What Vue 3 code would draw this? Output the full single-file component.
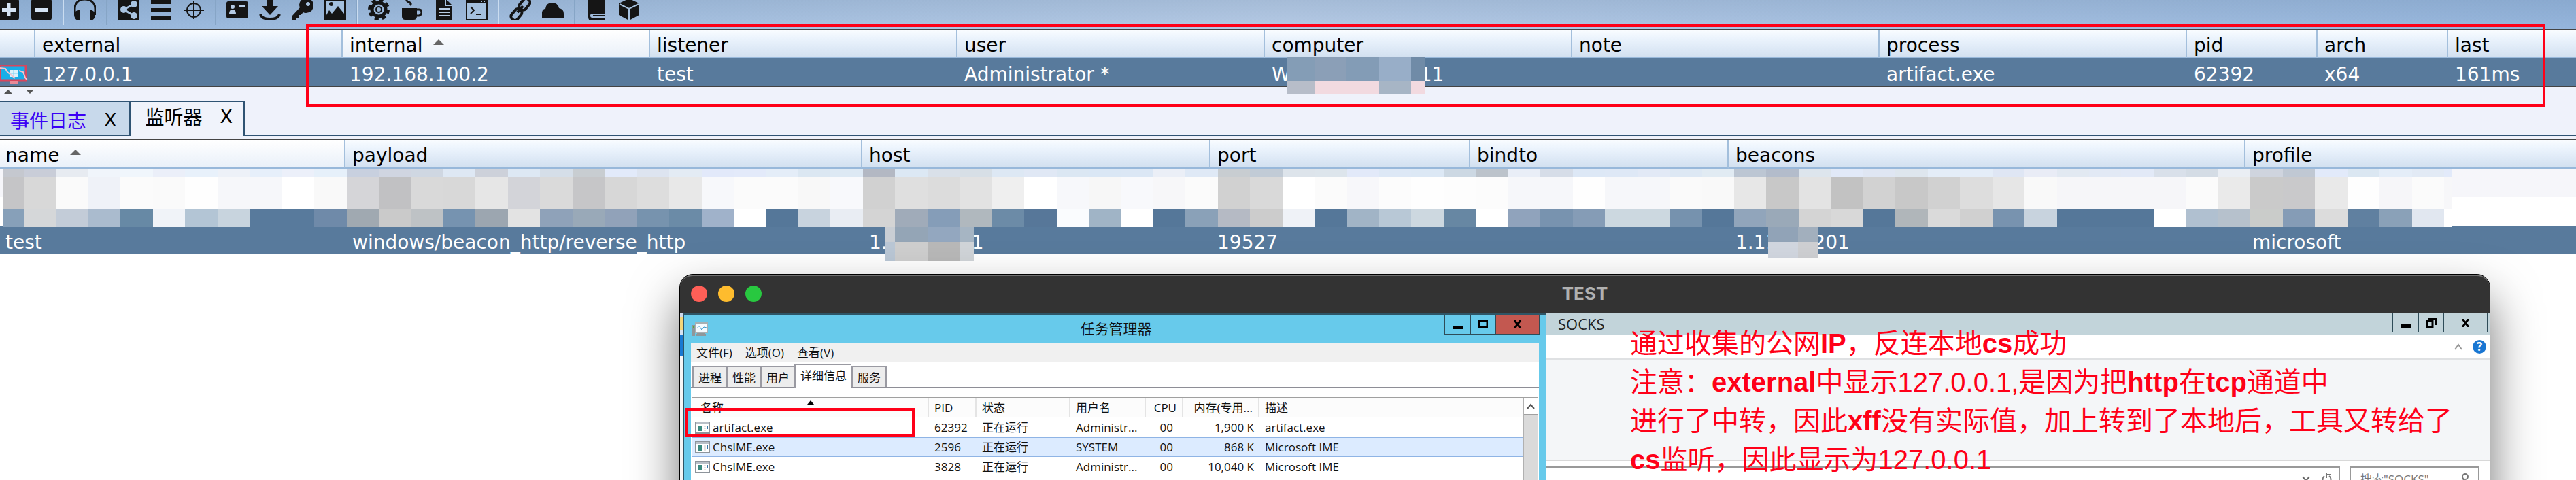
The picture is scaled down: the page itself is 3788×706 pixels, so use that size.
<script setup>
const toolbar = [
  'plus', 'minus', '|', 'headphones', '|', 'share', 'list', 'target', '|',
  'card', 'download', 'key', 'image', '|', 'gear', 'coffee', 'file', 'terminal', '|',
  'link', 'cloud', '|', 'book', 'cube',
]

const beaconCols = [
  { key: 'icon', w: 52 },
  { key: 'external', w: 452 },
  { key: 'internal', w: 452, sorted: true },
  { key: 'listener', w: 452 },
  { key: 'user', w: 452 },
  { key: 'computer', w: 452 },
  { key: 'note', w: 452 },
  { key: 'process', w: 452 },
  { key: 'pid', w: 192 },
  { key: 'arch', w: 192 },
  { key: 'last', w: 0 },
]
const beacon = {
  external: '127.0.0.1', internal: '192.168.100.2', listener: 'test', user: 'Administrator *',
  note: '', process: 'artifact.exe', pid: '62392', arch: 'x64', last: '161ms',
}

const listenerCols = [
  { key: 'name', w: 508, sorted: true },
  { key: 'payload', w: 760 },
  { key: 'host', w: 512 },
  { key: 'port', w: 382 },
  { key: 'bindto', w: 380 },
  { key: 'beacons', w: 760 },
  { key: 'profile', w: 0 },
]
const listener = {
  name: 'test', payload: 'windows/beacon_http/reverse_http', port: '19527', bindto: '', profile: 'microsoft',
}

const colors = (s) => s.trim().split(/\s+/).map((c) => '#' + c)
const mosaic = [
  ...colors(`c5c8cf c9cdd8 e7ebf1 f0f5fb f0f6fc ebeff9 e8f1fb edf1f8 e6effa ecf0fa e6f0fa
    c8d0df d0d5e1 cfd7e2 dee8f4 cdd1da dde8f4 d5dee8 c8cdd1 e2eafa dde4f0 e3ebf4 e2e9fa e3eafa e4edf8 dbe7f2 dde9f4
    b3b8c3 dce8f4 d9e0e9 d7dfe6 dde8f4 e0e8f5 dbe7f3 dae7f5 dbe7f5 ebeff7 dfe9f6
    c8cdd1 c1cbd6 dde4eb dde5ec e2e9f9 dde8f6 dce8f5 ccd8e3 bcc3cb e9eef7 d6dde8 dde8f6 dee8f6 e2e9f6 dde8f4 e1ebf3
    bcc6d3 b3bccb dde5ed e1e9f8 dfe6f3 dee6ee e4edf8 e4edf8 dfe6f4 e9ecf6 e2e9f2 e2e9f5 e2e9f7 d9e0ea d4dce5 eaeef4
    cfd4de c0c8d3 e2eafa dbe7f2 e4edf8 e2eaf5 e2eafa`),
  ...colors(`c5c5c7 d8d8d8 fafafa eff2f8 fbfbfb fafafa fefefe f6f7fa f6f7fa ffffff f9f9f9
    d5d5d8 c1c1c3 d9d9d9 d8d8d8 e6e6e6 d3d4d9 dadada c6c6c8 d7d7d7 dddddd e8e8e8 f7f8fb fbfbfb fbfbfb f8f8f8 f8f9fc
    d1d1d1 dfdfdf dcdcdc e2e2e2 efefef ffffff f7f8fb f7f7f7 f8f9fc f7f7f9 fbfbfb
    d1d1d1 d9d9d9 ffffff fbfbfb f7f7fa fcfcfc fefefe fdfdfd fcfcfc f6f7fa f6f7fa fefefe f6f7fa f6f7fa fafafa f9f9f9
    e7e7e7 c8c8c8 e3e3e3 c2c2c2 d2d2d2 c8c8c8 d1d1d1 dddddd e6e6e6 f9f9f9 f6f6f9 f6f6f9 f6f6f9 f6f6f9 fbfbfb eaeaea
    cacaca c9c9cb e9e9e9 fefefe f6f6f9 fbfbfb f7f7f9`),
  ...colors(`87a0b9 d5d7d9 c3ccd8 aabbce 6789a5 f0f3f8 b3c5d5 c8d4de 587a9c 587a9c 6f8aa9
    a0a9b1 cacaca bec2c5 7693b0 9ca6b0 e3e3e3 8fa2b9 99a9b8 91a2b9 7793ae 6b8ba7 a0b2ca ffffff 557799 c8d3de e9edf3
    d4d4d4 a0abb9 859db8 b0b8be 6c8ba7 577799 fafcfe a0b4c6 ffffff 557799 8aa1b8
    b5bac4 cccccc eff2f7 557799 a1b4c6 b8c8d6 cdd8e0 6787a3 ffffff 90a3bc 7893af 859cb6 ccd8e0 ccd8e0 7692ae 557799
    91a5bb 9aa9b8 d4d4d4 d8d8d8 557799 b0b6ba dadada d0d0d0 7893af c8d3de 557799 557799 557799 ffffff b0c0d0 b6c1cc
    caccca 859cb6 dcdcdc 6080a0 8aa1b8 e1e7f0 ffffff`),
]
const computerMask = colors('849db6 8b9fb7 839cb6 98aec8 708ba7 b7bdc9 f2dae0 f2dae0 a7b5c5 f2dae0')
const hostMask = colors('c9ced4 94a5b6 93a7bf a6b5c3 bac7d5 cecece b8b8b8 d0d4d8')
const beaconsMask = colors('91a3b7 a2afbd d1d6df cecfd2')

const procs = [
  { name: 'artifact.exe', pid: '62392', state: '正在运行', user: 'Administr...', cpu: '00', mem: '1,900 K', desc: 'artifact.exe' },
  { name: 'ChsIME.exe', pid: '2596', state: '正在运行', user: 'SYSTEM', cpu: '00', mem: '868 K', desc: 'Microsoft IME', selected: true },
  { name: 'ChsIME.exe', pid: '3828', state: '正在运行', user: 'Administr...', cpu: '00', mem: '10,040 K', desc: 'Microsoft IME' },
]
const taskTabs = ['进程', '性能', '用户', '详细信息', '服务']
</script>

<template>
  <main class="app">
    <nav class="toolbar" aria-label="toolbar">
      <template v-for="(t, i) in toolbar" :key="i">
        <span v-if="t === '|'" class="sep"></span>
        <button v-else class="tool" type="button" :aria-label="t">
          <svg viewBox="0 0 32 32" width="32" height="32" fill="#151515">
            <template v-if="t === 'plus'">
              <rect x="0" y="0" width="31" height="32" rx="4" />
              <path d="M16 7v19M6 16.500h20" stroke="#d5e4f4" stroke-width="5" />
            </template>
            <template v-else-if="t === 'minus'">
              <rect x="1" y="0" width="30" height="32" rx="4" />
              <path d="M7 16.500h18" stroke="#d5e4f4" stroke-width="5" />
            </template>
            <template v-else-if="t === 'headphones'">
              <path d="M1 24V15C1 6 7 1 15.500 1S31 6 31 15v9" fill="none" stroke="#151515" stroke-width="3" />
              <path d="M8 17v15H5q-5-3-5-8t5-7zM23 17v15h3q5-3 5-8t-5-7z" />
            </template>
            <template v-else-if="t === 'share'">
              <rect x="0" y="0" width="32" height="32" rx="3" />
              <path d="M24 8 9 16l15 9" fill="none" stroke="#a8c3e0" stroke-width="3" />
              <circle cx="24" cy="8" r="5" fill="#a8c3e0" /><circle cx="9" cy="16" r="5" fill="#a8c3e0" /><circle cx="24" cy="25" r="5" fill="#a8c3e0" />
            </template>
            <template v-else-if="t === 'list'">
              <path d="M1 2h30v6H1zM1 14h30v6H1zM1 26h30v6H1z" />
            </template>
            <template v-else-if="t === 'target'">
              <circle cx="16" cy="17" r="10" fill="none" stroke="#151515" stroke-width="2" />
              <path d="M16 4v26M1 17h30" stroke="#151515" stroke-width="2" />
            </template>
            <template v-else-if="t === 'card'">
              <rect x="0" y="4" width="32" height="25" rx="3" />
              <circle cx="9" cy="12" r="3" fill="#b5cbe4" />
              <path d="M4 22q0-6 5-6t5 6zM18 10h10v3H18z" fill="#b5cbe4" />
            </template>
            <template v-else-if="t === 'download'">
              <path d="M12 0h8v11h8L16 24 4 11h8z" />
              <path d="M2 23q2 7 14 7t14-7" fill="none" stroke="#151515" stroke-width="4" />
            </template>
            <template v-else-if="t === 'key'">
              <path d="M21 0q11 0 11 10T21 21q-3 0-4-1l-4 4h-3v4H7v3H0v-5l12-13q-1-2-1-4Q12 0 21 0z" />
              <circle cx="24" cy="8" r="3" fill="#a8c3e0" />
            </template>
            <template v-else-if="t === 'image'">
              <path d="M0 0h32v31H0z" />
              <path d="M3 3h26v19l-9-11-9 11-4-5-4 7z" fill="#a4c0de" />
              <circle cx="10" cy="8" r="3" />
            </template>
            <template v-else-if="t === 'gear'">
              <circle cx="16" cy="16" r="14" fill="none" stroke="#151515" stroke-width="4" stroke-dasharray="6 5" />
              <circle cx="16" cy="16" r="10" fill="none" stroke="#151515" stroke-width="5" />
              <circle cx="16" cy="16" r="4" fill="none" stroke="#151515" stroke-width="2" />
            </template>
            <template v-else-if="t === 'coffee'">
              <path d="M2 14h22v12q0 5-5 5H7q-5 0-5-5z" />
              <path d="M24 16h3q4 0 4 4t-4 5h-3M10 0q-3 3 2 5t2 5" fill="none" stroke="#151515" stroke-width="3" />
            </template>
            <template v-else-if="t === 'file'">
              <path d="M4 0h14l10 10v22H4z" />
              <path d="M18 0v10h10" fill="none" stroke="#a8c3e0" stroke-width="2" />
              <path d="M8 15h16M8 20h16M8 25h16" stroke="#b8cde5" stroke-width="2" />
            </template>
            <template v-else-if="t === 'terminal'">
              <path d="M1 3h30v28H1z" fill="#a4c0de" stroke="#151515" stroke-width="2" />
              <path d="M0 0h32v7H0z" /><path d="M22 4h2M26 4h2" stroke="#a4c0de" stroke-width="2" />
              <path d="m7 12 5 5-5 5M15 23h7" fill="none" stroke="#151515" stroke-width="2" />
            </template>
            <template v-else-if="t === 'link'">
              <g fill="none" stroke="#151515" stroke-width="4">
                <rect x="13" y="3" width="18" height="11" rx="5" transform="rotate(-50 22 8)" />
                <rect x="1" y="18" width="18" height="11" rx="5" transform="rotate(-50 10 23)" />
                <path d="m12 20 8-9" />
              </g>
            </template>
            <template v-else-if="t === 'cloud'">
              <path d="M0 28V20q1-5 5-5 1-9 10-9 8 0 10 8 7 1 7 8v6z" />
            </template>
            <template v-else-if="t === 'book'">
              <path d="M5 0h23v22H10q-3 0-3 3t3 3h18v4H8q-4 0-4-5V2z" />
              <path d="M11 25h17" stroke="#151515" stroke-width="2" />
            </template>
            <template v-else>
              <path d="m16 0 15 7v17l-15 8-15-8V7z" />
              <path d="m2 8 14 7 14-7M16 15v17" fill="none" stroke="#a8c3e0" stroke-width="2" />
            </template>
          </svg>
        </button>
      </template>
    </nav>

    <table class="grid">
      <colgroup><col v-for="c in beaconCols" :key="c.key" :style="c.w ? { width: c.w + 'px' } : {}" /></colgroup>
      <thead>
        <tr>
          <th v-for="c in beaconCols" :key="c.key" :class="{ sorted: c.sorted }" scope="col">
            <template v-if="c.key !== 'icon'">{{ c.key }}</template><i v-if="c.sorted" class="up"></i>
          </th>
        </tr>
      </thead>
      <tbody>
        <tr class="sel">
          <td v-for="c in beaconCols" :key="c.key" :class="c.key">
            <svg v-if="c.key === 'icon'" class="host-icon" viewBox="0 0 41 30" width="41" height="30">
              <path d="M0 1h38v22H0z" fill="#17aee8" stroke="#d8455c" stroke-width="3" />
              <path d="M14 8h13v10H14z" fill="#fff" opacity=".85" /><path d="M14 13h13M20 8v10" stroke="#7fd0f0" stroke-width="1" />
              <path d="m0 5 8 1 3 5 5 4 6 5M28 9l6 2 3 8 3 4" fill="none" stroke="#f4c3cb" stroke-width="2" />
              <path d="M14 24h12v4H14z" fill="#e98a97" />
            </svg>
            <template v-else-if="c.key === 'computer'">
              W<span class="gap-computer"></span>11
              <span class="mask mask-computer"><i v-for="(m, k) in computerMask" :key="k" :style="{ background: m }"></i></span>
            </template>
            <template v-else>{{ beacon[c.key] }}</template>
          </td>
        </tr>
      </tbody>
    </table>

    <div class="splitter"><i class="up"></i><i class="up down"></i></div>

    <div class="tabs">
      <div class="tab"><button type="button">事件日志</button><button type="button" class="x">X</button></div>
      <div class="tab active"><button type="button">监听器</button><button type="button" class="x">X</button></div>
      <div class="tabs-rest"></div>
    </div>

    <section class="listeners">
      <table class="grid">
        <colgroup><col v-for="c in listenerCols" :key="c.key" :style="c.w ? { width: c.w + 'px' } : {}" /></colgroup>
        <thead>
          <tr>
            <th v-for="c in listenerCols" :key="c.key" :class="{ sorted: c.sorted }" scope="col">{{ c.key }}<i v-if="c.sorted" class="up"></i></th>
          </tr>
        </thead>
        <tbody>
          <tr class="odd"><td :colspan="listenerCols.length"></td></tr>
          <tr class="even"><td :colspan="listenerCols.length"></td></tr>
          <tr class="sel">
            <td v-for="c in listenerCols" :key="c.key" :class="c.key">
              <template v-if="c.key === 'host'">
                1.<span class="gap-host"></span>1
                <span class="mask mask-host"><i v-for="(m, k) in hostMask" :key="k" :style="{ background: m }"></i></span>
              </template>
              <template v-else-if="c.key === 'beacons'">
                1.11<span class="gap-beacons"></span>201
                <span class="mask mask-beacons"><i v-for="(m, k) in beaconsMask" :key="k" :style="{ background: m }"></i></span>
              </template>
              <template v-else>{{ listener[c.key] }}</template>
            </td>
          </tr>
        </tbody>
      </table>
      <div class="mosaic"><i v-for="(m, k) in mosaic" :key="k" :style="{ background: m }"></i></div>
    </section>

    <div class="outline outline-beacon"></div>

    <section class="mac">
      <header class="mac-bar">
        <div class="lights">
          <button class="red" type="button" aria-label="close"></button>
          <button class="yellow" type="button" aria-label="minimize"></button>
          <button class="green" type="button" aria-label="zoom"></button>
        </div>
        <h1>TEST</h1>
      </header>
      <div class="mac-body">
        <div class="behind"></div>

        <section class="task">
          <header class="task-bar">
            <svg viewBox="0 0 23 20" width="23" height="20">
              <path d="M0 4h4v16H0zM7 15h11v2h2v3H5v-3h2z" fill="#8f979b" />
              <path d="M1 6h2v3H1z" fill="#52b03b" />
              <path d="M5 1h17v14H5z" fill="#f5fbff" stroke="#a6b0b4" stroke-width="2" />
              <path d="m7 9 3-4 4 6 3-4 4 1" fill="none" stroke="#2a90c9" stroke-width="1" />
            </svg>
            <h2>任务管理器</h2>
            <div class="wbtns">
              <button type="button" aria-label="最小化"><svg width="14" height="14" viewBox="0 0 14 14"><path d="M0 9h14v5H0z" /></svg></button>
              <button type="button" aria-label="最大化"><svg width="14" height="12" viewBox="0 0 14 12"><path d="M1 1h12v9H1z" fill="none" stroke="#000" stroke-width="3" /></svg></button>
              <button type="button" class="close" aria-label="关闭"><svg width="13" height="12" viewBox="0 0 13 12"><path d="m2 0 9 12M11 0 2 12" stroke="#000" stroke-width="3" /></svg></button>
            </div>
          </header>
          <div class="panel">
            <nav class="menu"><button type="button">文件(F)</button><button type="button">选项(O)</button><button type="button">查看(V)</button></nav>
            <div class="ttabs">
              <button v-for="t in taskTabs" :key="t" type="button" :class="{ on: t === '详细信息' }">{{ t }}</button>
            </div>
            <div class="procs">
              <table>
                <colgroup><col class="c-name" /><col class="c-pid" /><col class="c-state" /><col class="c-user" /><col class="c-cpu" /><col class="c-mem" /><col /></colgroup>
                <thead>
                  <tr>
                    <th class="name" scope="col">名称<i class="sort"></i></th><th scope="col">PID</th><th scope="col">状态</th><th scope="col">用户名</th>
                    <th class="r" scope="col">CPU</th><th class="r" scope="col">内存(专用...</th><th scope="col">描述</th>
                  </tr>
                </thead>
                <tbody>
                  <tr v-for="(p, i) in procs" :key="i" :class="{ selected: p.selected }">
                    <td class="pname">
                      <svg viewBox="0 0 22 18" width="22" height="18">
                        <path d="M1 1h20v16H1z" fill="#fff" stroke="#8d949b" stroke-width="2" />
                        <path d="M1 1h20v3H1z" fill="#b9c0c8" />
                        <path d="M4 6h7v8H4z" fill="#3a8a7f" /><path d="M13 7h3M13 10h3M13 13h3" stroke="#c8c8c8" /><path d="M18 6v5" stroke="#3d78a8" stroke-width="2" />
                      </svg>{{ p.name }}
                    </td>
                    <td>{{ p.pid }}</td><td>{{ p.state }}</td><td>{{ p.user }}</td>
                    <td class="cpu">{{ p.cpu }}</td><td class="r">{{ p.mem }}</td><td>{{ p.desc }}</td>
                  </tr>
                </tbody>
              </table>
              <div class="scroll">
                <button type="button" aria-label="向上滚动"><svg width="12" height="9" viewBox="0 0 12 9"><path d="m1 8 5-6 5 6" fill="none" stroke="#555" stroke-width="2" /></svg></button>
                <div class="thumb"></div>
              </div>
            </div>
          </div>
        </section>

        <section class="socks">
          <header class="socks-bar">
            <h2>SOCKS</h2>
            <div class="wbtns">
              <button type="button" aria-label="最小化"><svg width="14" height="14" viewBox="0 0 14 14"><path d="M0 9h14v5H0z" /></svg></button>
              <button type="button" aria-label="还原"><svg width="16" height="14" viewBox="0 0 16 14"><path d="M2 4h8v9H2z" fill="none" stroke="#000" stroke-width="3" /><path d="M4 1h11v9" fill="none" stroke="#000" stroke-width="2" /></svg></button>
              <button type="button" class="close" aria-label="关闭"><svg width="13" height="12" viewBox="0 0 13 12"><path d="m2 0 9 12M11 0 2 12" stroke="#000" stroke-width="3" /></svg></button>
            </div>
          </header>
          <div class="ribbon">
            <svg width="12" height="10" viewBox="0 0 12 10"><path d="m1 9 5-7 5 7" fill="none" stroke="#999" stroke-width="2" /></svg>
            <button type="button" class="help" aria-label="帮助">?</button>
          </div>
          <div class="ribbon-body"></div>
          <div class="address">
            <div class="path">
              <svg width="12" height="8" viewBox="0 0 12 8"><path d="m1 1 5 6 5-6" fill="none" stroke="#666" stroke-width="2" /></svg>
              <svg width="16" height="18" viewBox="0 0 16 18"><path d="M5 5a6 6 0 1 0 7 0M8 1v7M8 3h6" fill="none" stroke="#777" stroke-width="2" /></svg>
            </div>
            <label class="search">
              <input type="text" aria-label="搜索" placeholder='搜索"SOCKS"' />
              <svg width="14" height="18" viewBox="0 0 14 18"><circle cx="7" cy="6" r="4" fill="none" stroke="#777" stroke-width="2" /><path d="m5 10-4 7" stroke="#777" stroke-width="2" /></svg>
            </label>
          </div>
        </section>
      </div>
    </section>

    <div class="outline outline-proc"></div>
    <p class="note-text">
      通过收集的公网<b>IP</b>，反连本地<b>cs</b>成功<br />
      注意：<b>external</b>中显示127.0.0.1,是因为把<b>http</b>在<b>tcp</b>通道中<br />
      进行了中转，因此<b>xff</b>没有实际值，加上转到了本地后，工具又转给了<br />
      <b>cs</b>监听，因此显示为127.0.0.1
    </p>
  </main>
</template>

<style>
body { margin: 0; background: #fff; }
</style>

<style scoped>
* { box-sizing: border-box; }
button { border: 0; padding: 0; margin: 0; background: none; color: inherit; font: inherit; }
h1, h2, p { margin: 0; font-weight: 400; }
i { display: block; font-style: normal; }

.app {
  position: relative;
  height: 100vh;
  overflow: hidden;
  background: #fff;
  font-family: "DejaVu Sans", "Noto Sans CJK SC", sans-serif;
  font-size: 28px;
  color: #000;
}

.toolbar {
  display: flex;
  gap: 16px;
  height: 42px;
  overflow: hidden;
  background:
    linear-gradient(rgba(70, 100, 130, .14), rgba(255, 255, 255, 0)),
    linear-gradient(90deg, #97b7dc, #b5cae5 50%, #95b5dc);
}
.tool { width: 32px; height: 32px; margin-top: -2px; flex: none; }
.tool:first-child { margin-left: -3px; }
.tool svg { display: block; }
.sep { width: 2px; height: 37px; margin: 0 -1px; background: #cadcf0; border-left: 1px solid #86a5c6; flex: none; }

.grid {
  width: 100%;
  table-layout: fixed;
  border-collapse: separate;
  border-spacing: 0;
  border-top: 2px solid #444;
}
.grid th {
  height: 42px;
  padding: 6px 0 0 10px;
  line-height: 34px;
  font-weight: 400;
  text-align: left;
  background: linear-gradient(#f9fcff, #ecf4fd 30%, #d2e0f0);
  border-bottom: 2px solid #98b8da;
  border-right: 2px solid #a3bfdc;
}
.grid th:last-child { border-right: 0; }
.grid th.sorted { background: linear-gradient(#fff, #e9f0f9); }
.grid td { height: 42px; padding: 0; }
.grid tr.sel td {
  height: 40px;
  padding: 8px 0 0 10px;
  line-height: 32px;
  background: #587a9c;
  color: #fff;
  white-space: nowrap;
}
.grid tr.sel td.icon { padding: 8px 0 0; line-height: 0; }
.listeners .grid tr.sel td { height: 42px; line-height: 34px; }
.listeners .grid th:first-child, .listeners .grid tr.sel td:first-child { padding-left: 8px; }
.grid tr.odd td { background: #f6f6fa; }
.host-icon { display: block; }
.up {
  display: inline-block;
  margin-left: 16px;
  vertical-align: 10px;
  border: solid transparent;
  border-width: 0 8px 8px;
  border-bottom-color: #666;
}
.computer, .host, .beacons { position: relative; }
.gap-computer { display: inline-block; width: 190px; }
.gap-host { display: inline-block; width: 124px; }
.gap-beacons { display: inline-block; width: 52px; }
.mask { position: absolute; display: grid; }
.mask-computer { left: 32px; top: -2px; grid-template: 35px 19px / 41px 47px 48px 47px 21px; }
.mask-host { left: 34px; top: 0; grid-template: 24px 28px / 14px 48px 47px 21px; }
.mask-beacons { left: 58px; top: 2px; grid-template: 22px 24px / 44px 30px; }

.splitter {
  display: flex;
  gap: 20px;
  height: 22px;
  padding: 4px 6px;
  border-top: 2px solid #444;
  background: #eff2fb;
}
.splitter .up { margin: 0; height: 0; border-width: 0 6px 6px; border-bottom-color: #555; }
.splitter .down { transform: rotate(180deg); }

.tabs { display: flex; height: 56px; padding-bottom: 4px; background: #eff2fb; }
.tab {
  display: flex;
  gap: 26px;
  align-items: center;
  padding: 4px 18px 0 15px;
  border: 2px solid #2f5373;
  border-left: 0;
  background: #c8d9eb;
  color: #3b00f5;
}
.tab .x { color: #000; font-size: 27px; }
.tab.active { padding: 0 16px 8px 22px; border-bottom: 0; background: #f0f3fb; color: #000; }
.tabs-rest { flex: 1; border-bottom: 2px solid #2f5373; }

.listeners { position: relative; }
.mosaic {
  position: absolute;
  left: 4px;
  right: 182px;
  top: 44px;
  display: grid;
  grid-template-columns: 31px repeat(75, minmax(0, 1fr)) 12px;
  grid-template-rows: 13px 47px 26px;
}

.outline { position: absolute; border: 4px solid #ff0018; pointer-events: none; }
.outline-beacon { left: 450px; right: 45px; top: 36px; height: 121px; }
.outline-proc { left: 1008px; top: 600px; width: 337px; height: 43px; }

.mac {
  position: absolute;
  left: 999px;
  right: 126px;
  top: 403px;
  bottom: -60px;
  display: flex;
  flex-direction: column;
  border: 1px solid #000;
  border-radius: 20px 20px 0 0;
  background: #333;
  box-shadow: 0 36px 70px rgba(0, 0, 0, .55);
  font-family: "Open Sans", "Noto Sans CJK SC", sans-serif;
  font-size: 17px;
  color: #111;
}
.mac-bar {
  display: grid;
  grid-template-columns: 1fr auto 1fr;
  align-items: center;
  height: 57px;
  padding-bottom: 2px;
  border-radius: 19px 19px 0 0;
  border-top: 2px solid #707070;
  border-bottom: 1px solid #000;
  flex: none;
}
.mac-bar h1 { font: 700 26px/32px Inter, "Liberation Sans", sans-serif; color: #b0b0b0; }
.lights { display: flex; gap: 16px; padding-left: 16px; }
.lights button { width: 24px; height: 24px; border-radius: 50%; }
.red { background: #ff5f57; }
.yellow { background: #febc2e; }
.green { background: #28c840; }
.mac-body { display: flex; flex: 1; min-height: 0; overflow: hidden; }
.behind {
  width: 5px;
  flex: none;
  background: linear-gradient(#cfd9ea 5px, #f3d67a 5px 24px, #d6e2f2 24px 31px, #1979d2 31px 63px, #f6f6f6 63px);
}

.task {
  display: flex;
  flex-direction: column;
  width: 1269px;
  flex: none;
  border: solid #2e5566;
  border-width: 2px 1px 0;
  background: #67caeb;
}
.task-bar { display: grid; grid-template-columns: 1fr auto 1fr; align-items: center; height: 41px; padding: 0 9px 0 12px; flex: none; }
.task-bar h2 { padding-bottom: 2px; font-size: 21px; line-height: 28px; }
.wbtns { display: flex; justify-self: end; align-self: start; border: 1px solid #2e4c58; border-top: 0; }
.wbtns button { display: flex; align-items: center; justify-content: center; width: 37px; height: 28px; border-left: 1px solid #2e4c58; }
.wbtns button:first-child { border-left: 0; }
.wbtns .close { width: 64px; }
.task .close { background: #c35850; }
.panel { display: flex; flex-direction: column; flex: 1; margin: 0 10px; background: #fff; border-top: 1px solid #8fb9c9; }
.menu { display: flex; gap: 19px; height: 28px; padding: 0 0 4px 8px; background: #f0f0f0; flex: none; }
.ttabs { display: flex; align-items: flex-end; height: 38px; padding-left: 2px; border-bottom: 2px solid #8e8e96; flex: none; }
.ttabs button { height: 31px; padding: 0 7px; border: 2px solid #9a9aa2; border-bottom: 0; border-right-width: 0; background: #ededed; }
.ttabs button:last-child { border-right-width: 2px; }
.ttabs .on { height: 36px; margin-bottom: -2px; padding-bottom: 5px; background: #fff; }
.procs { display: flex; flex: 1; margin: 13px 1px 0; border-top: 2px solid #a0a0a0; }
.procs table { flex: 1; align-self: flex-start; table-layout: fixed; border-collapse: separate; border-spacing: 0; width: 100%; line-height: 27px; }
.c-name { width: 349px; }
.c-pid { width: 70px; }
.c-state { width: 138px; }
.c-user { width: 111px; }
.c-cpu { width: 55px; }
.c-mem { width: 112px; }
.procs th { height: 28px; padding: 0 8px; font-weight: 400; text-align: left; white-space: nowrap; background: #fcfcfc; border-right: 2px solid #e4e4e4; border-bottom: 1px solid #e4e4e4; }
.procs th.name { position: relative; padding-left: 13px; }
.procs th:last-child { border-right: 0; }
.procs td { height: 29px; padding: 0 8px; white-space: nowrap; }
.procs .r { text-align: right; }
.procs .cpu { text-align: right; padding-right: 15px; }
.procs .pname { padding-left: 5px; }
.pname svg { margin-right: 4px; vertical-align: -3px; }
.selected td { background: #dcebff; box-shadow: inset 0 1px #8fb4e5, inset 0 -1px #8fb4e5; }
.sort { position: absolute; left: 170px; top: 3px; border: solid transparent; border-width: 0 5px 6px; border-bottom-color: #000; }
.scroll { display: flex; flex-direction: column; width: 22px; flex: none; border-left: 1px solid #b0b0b0; border-right: 1px solid #b0b0b0; }
.scroll button { height: 23px; background: #fff; line-height: 0; }
.thumb { flex: 1; border-top: 2px solid #a0a0a0; background: #dadada; }

.socks { display: flex; flex-direction: column; flex: 1; min-width: 0; background: #fff; }
.socks-bar { display: flex; justify-content: space-between; height: 31px; padding: 0 3px 0 17px; background: #c2d4da; flex: none; }
.socks-bar h2 { font-size: 22px; line-height: 30px; color: #222; }
.socks-bar .wbtns button { height: 27px; }
.ribbon { display: flex; align-items: center; justify-content: flex-end; gap: 15px; height: 37px; padding-right: 5px; border-bottom: 2px solid #dfe1e3; flex: none; }
.help { width: 20px; height: 20px; border-radius: 50%; background: #1976d2; color: #fff; font-weight: 700; line-height: 20px; }
.ribbon-body { height: 149px; background: #f4f6f8; border-bottom: 1px solid #d8d8d8; flex: none; }
.address { display: flex; gap: 14px; padding: 8px 15px 0 0; flex: none; }
.path { display: flex; flex: 1; align-items: center; justify-content: flex-end; gap: 16px; height: 36px; padding-right: 10px; border: 2px solid #999; border-left: 0; }
.search { display: flex; align-items: center; width: 191px; height: 36px; padding: 0 12px 0 14px; border: 2px solid #999; }
.search input { flex: 1; min-width: 0; border: 0; padding: 0; outline: 0; background: none; font: inherit; color: #333; }
.search input::placeholder { color: #777; opacity: 1; }

.note-text {
  position: absolute;
  left: 2397px;
  top: 477px;
  font: 400 40px/57px "Liberation Sans", "Noto Sans CJK SC", sans-serif;
  color: #ff0018;
  white-space: nowrap;
}
</style>
